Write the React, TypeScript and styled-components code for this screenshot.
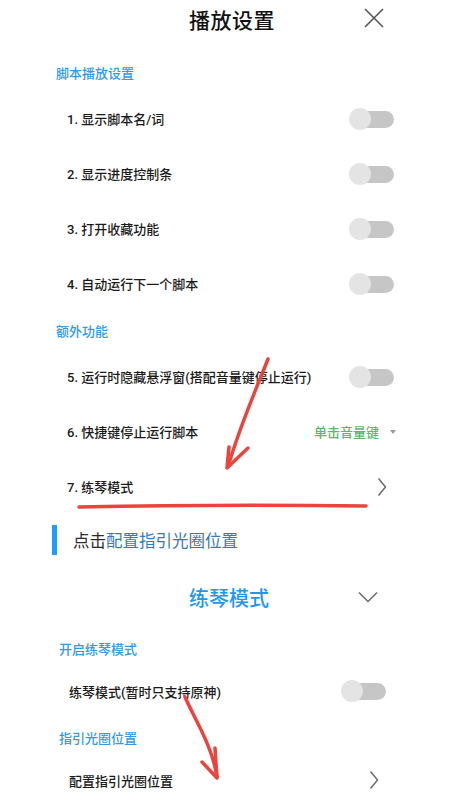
import React from 'react';
import styled, { createGlobalStyle } from 'styled-components';

const GlobalStyle = createGlobalStyle`
  body {
    margin: 0;
    background: #fff;
    font-family: Roboto, "Noto Sans CJK SC", sans-serif;
    color: #222;
  }
`;

const firstItems = [
  { label: '1. 显示脚本名/词' },
  { label: '2. 显示进度控制条' },
  { label: '3. 打开收藏功能' },
  { label: '4. 自动运行下一个脚本' },
];

const ChevronRight = () => (
  <svg width="10" height="20" viewBox="0 0 10 20">
    <path d="M1.5 1.5 L8.5 10 L1.5 18.5" fill="none" stroke="#6b6b6b" strokeWidth="1.5" />
  </svg>
);

const App = () => {
  return (
    <Page>
      <GlobalStyle />
      <Header>
        <Title>播放设置</Title>
        <CloseButton>
          <svg width="20" height="20" viewBox="0 0 20 20">
            <path d="M1 1 L19 19 M19 1 L1 19" stroke="#555" strokeWidth="1.6" />
          </svg>
        </CloseButton>
      </Header>

      <Panel $left={56} $right={56}>
        <SectionTitle $top={15}>脚本播放设置</SectionTitle>
        {firstItems.map((item) => (
          <Row key={item.label} $indent={11}>
            <RowLabel>{item.label}</RowLabel>
            <Toggle />
          </Row>
        ))}
        <SectionTitle>额外功能</SectionTitle>
        <Row $indent={11}>
          <RowLabel>5. 运行时隐藏悬浮窗(搭配音量键停止运行)</RowLabel>
          <Toggle />
        </Row>
        <Row $indent={11}>
          <RowLabel>6. 快捷键停止运行脚本</RowLabel>
          <Picker>
            单击音量键
            <Caret />
          </Picker>
        </Row>
        <Row $indent={11}>
          <RowLabel>7. 练琴模式</RowLabel>
          <ChevronBox>
            <ChevronRight />
          </ChevronBox>
        </Row>
      </Panel>

      <Callout>
        <CalloutBar />
        <CalloutText>
          点击<CalloutLink>配置指引光圈位置</CalloutLink>
        </CalloutText>
      </Callout>

      <SubHeader>
        <SubTitle>练琴模式</SubTitle>
        <ChevronDown>
          <svg width="20" height="12" viewBox="0 0 20 12">
            <path d="M1 1.5 L10 10.5 L19 1.5" fill="none" stroke="#6b6b6b" strokeWidth="1.5" />
          </svg>
        </ChevronDown>
      </SubHeader>

      <Panel $left={59} $right={64}>
        <SectionTitle $top={12}>开启练琴模式</SectionTitle>
        <Row $indent={10} $height={48}>
          <RowLabel>练琴模式(暂时只支持原神)</RowLabel>
          <Toggle />
        </Row>
        <SectionTitle $top={3}>指引光圈位置</SectionTitle>
        <Row $indent={10} $height={48}>
          <RowLabel>配置指引光圈位置</RowLabel>
          <ChevronBox>
            <ChevronRight />
          </ChevronBox>
        </Row>
      </Panel>

      <Annotations width="450" height="800" viewBox="0 0 450 800">
        <g fill="none" stroke="#e9453d" strokeWidth="3.5" strokeLinecap="round" strokeLinejoin="round">
          <path d="M268 359 C 258 385, 240 425, 228 467" />
          <path d="M229 447 L227 468 L248 448" />
          <path d="M79 507 C 180 505, 280 505, 366 506" />
          <path d="M185 697 C 195 720, 212 745, 217 777" />
          <path d="M202 762 L217 778 L215 748" />
        </g>
      </Annotations>
    </Page>
  );
};

const Toggle = () => (
  <ToggleWrap>
    <ToggleTrack />
    <ToggleThumb />
  </ToggleWrap>
);

const Page = styled.div`
  position: relative;
  width: 450px;
  height: 800px;
  overflow: hidden;
  background: #fff;
`;

const Header = styled.div`
  height: 38px;
  display: flex;
  align-items: center;
  justify-content: center;
  position: relative;
  padding-left: 14px;
`;

const Title = styled.h1`
  margin: 0;
  font-size: 21px;
  font-weight: 500;
  color: #111;
  letter-spacing: 0.5px;
`;

const CloseButton = styled.div`
  position: absolute;
  left: 364px;
  top: 8px;
  width: 20px;
  height: 20px;
`;

const Panel = styled.div<{ $left: number; $right: number }>`
  display: flex;
  flex-direction: column;
  padding: 0 ${(p) => p.$right}px 0 ${(p) => p.$left}px;
`;

const SectionTitle = styled.div<{ $top?: number }>`
  height: 38px;
  margin-top: ${(p) => p.$top || 0}px;
  display: flex;
  align-items: center;
  font-size: 13px;
  font-weight: 500;
  color: #2f9ae6;
`;

const Row = styled.div<{ $indent: number; $height?: number }>`
  height: ${(p) => p.$height || 55}px;
  display: flex;
  align-items: center;
  justify-content: space-between;
  padding-left: ${(p) => p.$indent}px;
`;

const RowLabel = styled.span`
  font-size: 13px;
  font-weight: 500;
  color: #1a1a1a;
  white-space: nowrap;
`;

const ToggleWrap = styled.div`
  position: relative;
  width: 45px;
  height: 22px;
  flex-shrink: 0;
`;

const ToggleTrack = styled.div`
  position: absolute;
  left: 10px;
  right: 0;
  top: 3px;
  height: 17px;
  border-radius: 9px;
  background: #c6c6c6;
`;

const ToggleThumb = styled.div`
  position: absolute;
  left: 0;
  top: 0;
  width: 22px;
  height: 22px;
  border-radius: 50%;
  background: #e4e4e4;
`;

const Picker = styled.div`
  display: flex;
  align-items: center;
  gap: 11px;
  font-size: 13px;
  font-weight: 500;
  color: #5bb86a;
  margin-right: -2px;
`;

const Caret = styled.span`
  width: 0;
  height: 0;
  border-left: 3.5px solid transparent;
  border-right: 3.5px solid transparent;
  border-top: 4px solid #9a9a9a;
`;

const ChevronBox = styled.div`
  display: flex;
  align-items: center;
  margin-right: 7px;
`;

const Callout = styled.div`
  display: flex;
  align-items: center;
  gap: 16px;
  height: 30px;
  margin: 11px 0 0 52px;
`;

const CalloutBar = styled.div`
  width: 5px;
  height: 30px;
  background: #1e9bff;
`;

const CalloutText = styled.div`
  font-size: 16.5px;
  color: #2a2a2a;
`;

const CalloutLink = styled.span`
  color: #3579bd;
`;

const SubHeader = styled.div`
  height: 40px;
  margin-top: 22px;
  display: flex;
  align-items: center;
  justify-content: center;
  position: relative;
  padding-left: 8px;
`;

const SubTitle = styled.div`
  font-size: 20px;
  font-weight: 500;
  color: #2196ee;
`;

const ChevronDown = styled.div`
  position: absolute;
  left: 358px;
  top: 14px;
  display: flex;
`;

const Annotations = styled.svg`
  position: absolute;
  left: 0;
  top: 0;
  pointer-events: none;
`;

export default App;
